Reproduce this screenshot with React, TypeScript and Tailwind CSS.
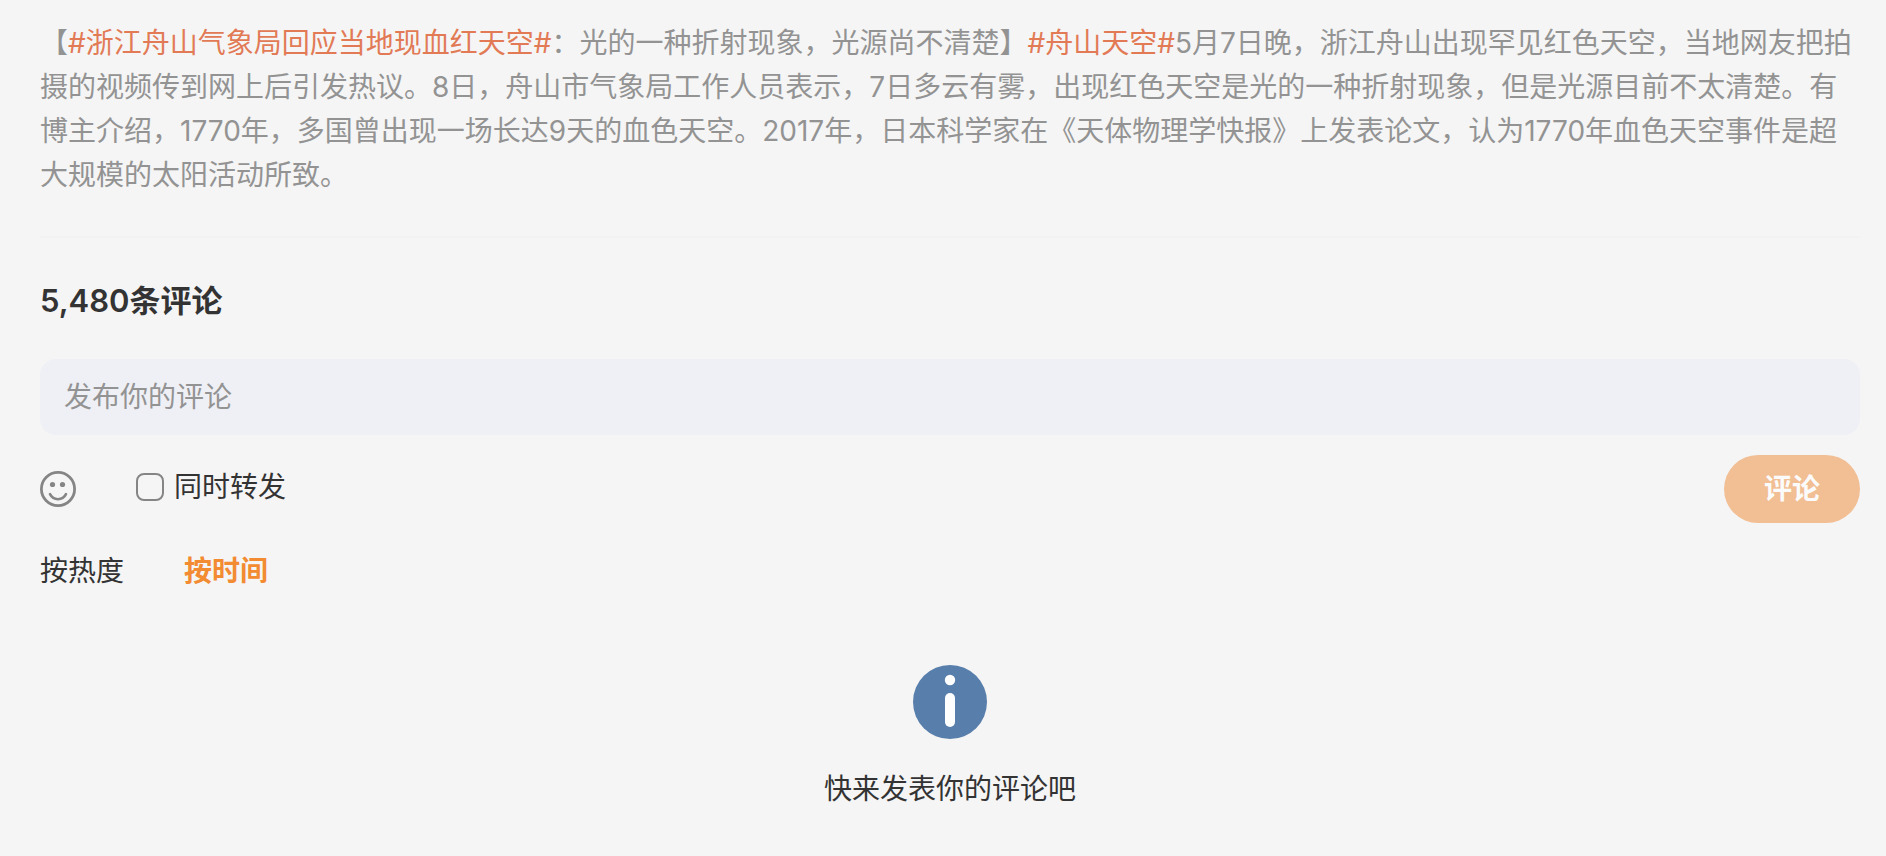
import React, { useState } from 'react';

type SortKey = 'hot' | 'time';

const sortTabs: { key: SortKey; label: string }[] = [
  { key: 'hot', label: '按热度' },
  { key: 'time', label: '按时间' },
];

const SmileIcon = () => (
  <svg viewBox="0 0 36 36" className="w-9 h-9" fill="none" aria-hidden="true">
    <circle cx="18" cy="18" r="16.6" stroke="#858585" strokeWidth="2.8" />
    <circle cx="12.5" cy="13.5" r="2.6" fill="#858585" />
    <circle cx="22.5" cy="13.5" r="2.6" fill="#858585" />
    <path d="M10 23.2c1.6 3.2 4.5 5 8 5s6.4-1.8 8-5" stroke="#858585" strokeWidth="2.6" strokeLinecap="round" />
  </svg>
);

const InfoIcon = () => (
  <svg viewBox="0 0 74 74" className="w-[74px] h-[74px]" aria-hidden="true">
    <circle cx="37" cy="37" r="37" fill="#587eac" />
    <circle cx="37" cy="15" r="5.2" fill="#fff" />
    <rect x="32" y="28" width="10" height="34" rx="5" fill="#fff" />
  </svg>
);

const TopicLink = ({ children }: { children: React.ReactNode }) => (
  <a href="#" className="text-[#e27a56]">
    {children}
  </a>
);

const App = () => {
  const [comment, setComment] = useState('');
  const [repost, setRepost] = useState(false);
  const [sort, setSort] = useState<SortKey>('time');

  return (
    <div
      lang="zh-CN"
      className="min-h-screen bg-[#f5f5f5] pt-[21px] pl-10 pr-[26px] pb-10 text-[28px] leading-[44px] text-[#333333] font-['Inter','Noto_Sans_CJK_SC',sans-serif]"
    >
      {/* Post text */}
      <p className="text-[#939393]">
        【<TopicLink>#浙江舟山气象局回应当地现血红天空#</TopicLink>：光的一种折射现象，光源尚不清楚】<TopicLink>#舟山天空#</TopicLink>5月7日晚，浙江舟山出现罕见红色天空，当地网友把拍摄的视频传到网上后引发热议。8日，舟山市气象局工作人员表示，7日多云有雾，出现红色天空是光的一种折射现象，但是光源目前不太清楚。有博主介绍，1770年，多国曾出现一场长达9天的血色天空。2017年，日本科学家在《天体物理学快报》上发表论文，认为1770年血色天空事件是超大规模的太阳活动所致。
      </p>

      <hr className="mt-[39px] border-t-2 border-[#f2f2f2]" />

      {/* Comments */}
      <section>
        <h2 className="mt-[41px] text-[31px] leading-[44px] font-semibold">5,480条评论</h2>

        <form onSubmit={e => e.preventDefault()}>
          <input
            type="text"
            aria-label="发布你的评论"
            placeholder="发布你的评论"
            value={comment}
            onChange={e => setComment(e.target.value)}
            className="block mt-9 w-full h-[76px] px-6 rounded-2xl bg-[#eff0f5] placeholder:text-[#939393] placeholder:opacity-100 outline-none"
          />

          <div className="mt-5 flex items-center">
            <button type="button" aria-label="表情">
              <SmileIcon />
            </button>
            <label className="ml-[60px] mb-1 flex items-center gap-[10px]">
              <input
                type="checkbox"
                checked={repost}
                onChange={e => setRepost(e.target.checked)}
                className="appearance-none w-7 h-7 rounded-lg border-2 border-[#858585] checked:bg-[#f28b32] checked:border-[#f28b32]"
              />
              同时转发
            </label>
            <button type="submit" className="ml-auto h-[68px] px-10 rounded-full bg-[#f2be93] text-[#fbfbfb] font-bold">
              评论
            </button>
          </div>
        </form>

        <div className="mt-6 flex gap-[60px]">
          {sortTabs.map(tab => (
            <button
              key={tab.key}
              type="button"
              onClick={() => setSort(tab.key)}
              className={sort === tab.key ? 'leading-[48px] font-bold text-[#f28b32]' : 'leading-[48px]'}
            >
              {tab.label}
            </button>
          ))}
        </div>

        {/* Empty list */}
        <div className="mt-[70px] flex flex-col items-center gap-7">
          <InfoIcon />
          <p>快来发表你的评论吧</p>
        </div>
      </section>
    </div>
  );
};

export default App;
